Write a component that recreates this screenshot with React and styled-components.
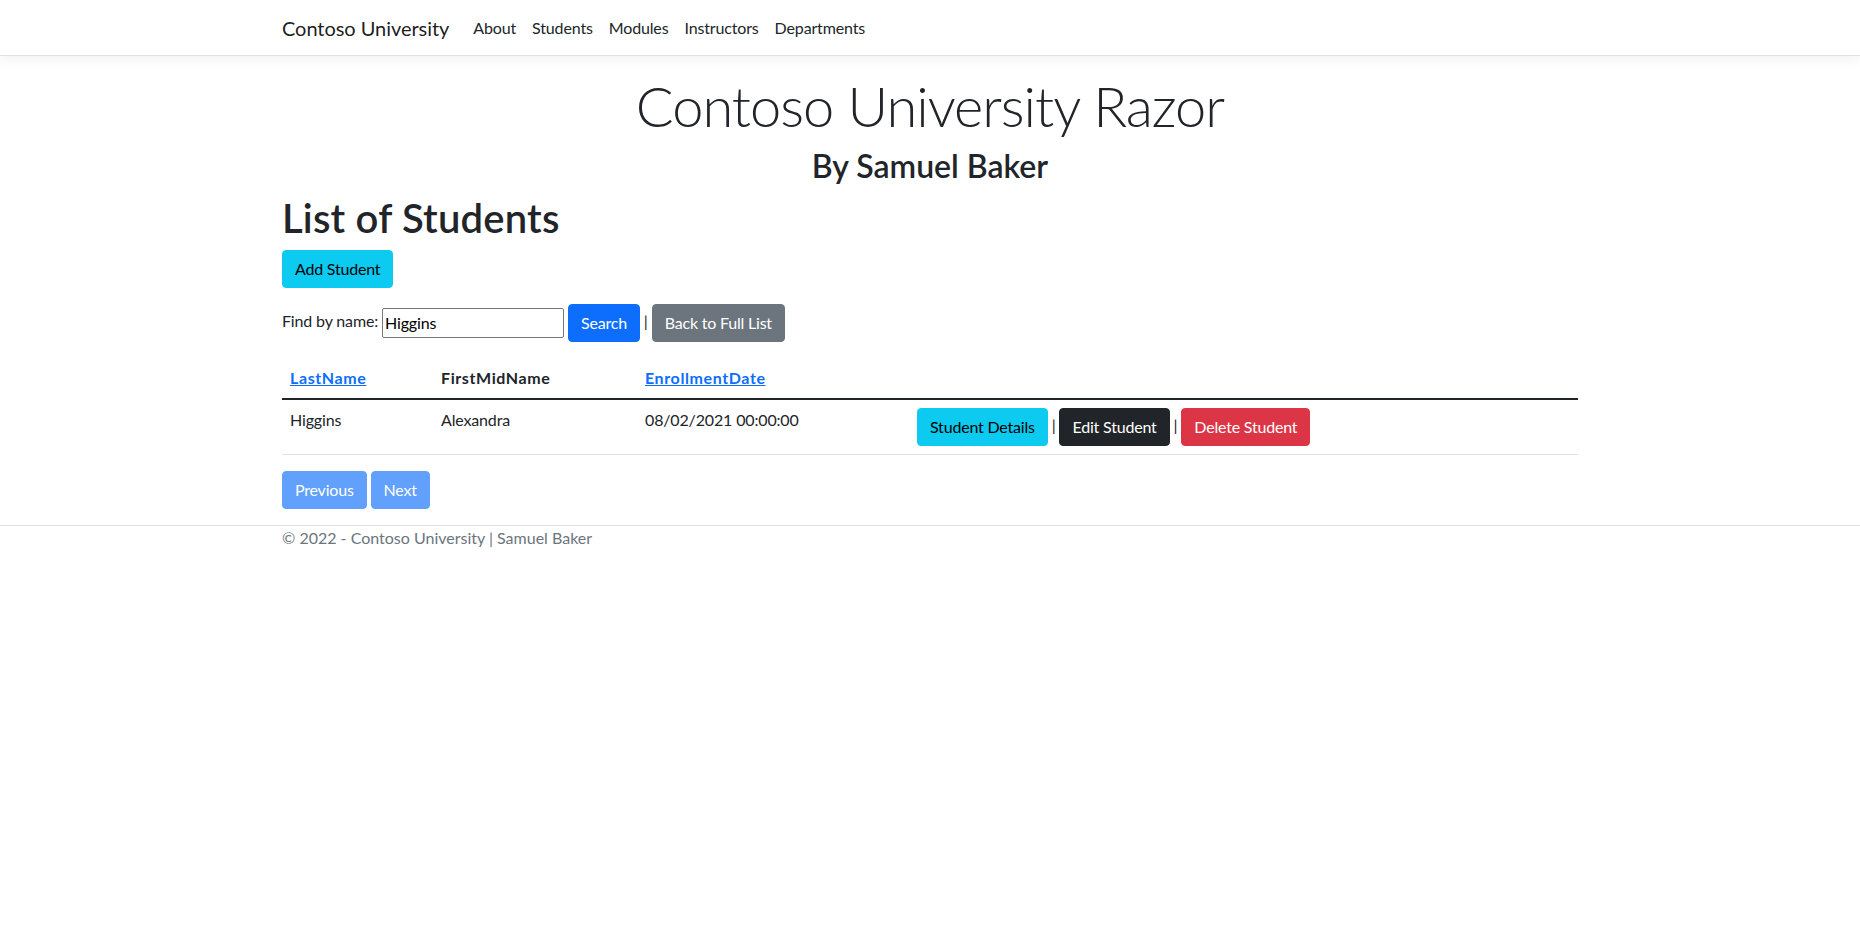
import React from 'react';
import styled, { createGlobalStyle, css } from 'styled-components';

const GlobalStyle = createGlobalStyle`
  *, *::before, *::after {
    box-sizing: border-box;
  }

  body {
    margin: 0;
    background: #fff;
    color: #212529;
    font-family: Lato, "Open Sans", sans-serif;
    font-size: 16px;
    font-weight: 400;
    line-height: 1.5;
    letter-spacing: -0.15px;
  }
`;

const students = [
  { last: 'Higgins', first: 'Alexandra', date: '08/02/2021 00:00:00' },
];

const variants = {
  info: css`
    background: #0dcaf0;
    border-color: #0dcaf0;
    color: #000;
  `,
  primary: css`
    background: #0d6efd;
    border-color: #0d6efd;
    color: #fff;
  `,
  secondary: css`
    background: #6c757d;
    border-color: #6c757d;
    color: #fff;
  `,
  dark: css`
    background: #212529;
    border-color: #212529;
    color: #fff;
  `,
  danger: css`
    background: #dc3545;
    border-color: #dc3545;
    color: #fff;
  `,
};

const App = () => {
  return (
    <>
      <GlobalStyle />
      <Navbar>
        <NavInner>
          <Brand href="#">Contoso University</Brand>
          <NavList>
            <li><NavLink href="#">About</NavLink></li>
            <li><NavLink href="#">Students</NavLink></li>
            <li><NavLink href="#">Modules</NavLink></li>
            <li><NavLink href="#">Instructors</NavLink></li>
            <li><NavLink href="#">Departments</NavLink></li>
          </NavList>
        </NavInner>
      </Navbar>

      <Container>
        <Main>
          <Hero>
            <DisplayTitle>Contoso University Razor</DisplayTitle>
            <SubTitle>By Samuel Baker</SubTitle>
          </Hero>

          <PageTitle>List of Students</PageTitle>

          <Para>
            <Button variant="info" href="#">Add Student</Button>
          </Para>

          <Para>
            Find by name:{' '}
            <SearchInput type="text" defaultValue="Higgins" />{' '}
            <Button as="button" variant="primary">Search</Button> |{' '}
            <Button variant="secondary" href="#">Back to Full List</Button>
          </Para>

          <Table>
            <thead>
              <tr>
                <Th width="151"><HeadLink href="#">LastName</HeadLink></Th>
                <Th width="204">FirstMidName</Th>
                <Th width="272"><HeadLink href="#">EnrollmentDate</HeadLink></Th>
                <Th></Th>
              </tr>
            </thead>
            <tbody>
              {students.map((s) => (
                <tr key={s.last}>
                  <Td>{s.last}</Td>
                  <Td>{s.first}</Td>
                  <Td>{s.date}</Td>
                  <Td>
                    <Button variant="info" href="#">Student Details</Button> |{' '}
                    <Button variant="dark" href="#">Edit Student</Button> |{' '}
                    <Button variant="danger" href="#">Delete Student</Button>
                  </Td>
                </tr>
              ))}
            </tbody>
          </Table>

          <Button variant="primary" disabled>Previous</Button>{' '}
          <Button variant="primary" disabled>Next</Button>
        </Main>
      </Container>

      <Footer>
        <Container>© 2022 - Contoso University | Samuel Baker</Container>
      </Footer>
    </>
  );
};

const Container = styled.div`
  width: 100%;
  max-width: 1320px;
  margin: 0 auto;
  padding: 0 12px;
`;

const Navbar = styled.nav`
  background: #fff;
  border-bottom: 1px solid #dee2e6;
  box-shadow: 0 4px 12px rgba(0, 0, 0, 0.05);
  margin-bottom: 16px;
  padding: 8px 0 7px;
`;

const NavInner = styled(Container)`
  display: flex;
  align-items: center;
`;

const Brand = styled.a`
  color: rgba(0, 0, 0, 0.9);
  font-size: 20px;
  line-height: 30px;
  letter-spacing: -0.05px;
  padding: 5px 0;
  margin-right: 16px;
  text-decoration: none;
  white-space: nowrap;
`;

const NavList = styled.ul`
  display: flex;
  list-style: none;
  margin: 0;
  padding: 0;
`;

const NavLink = styled.a`
  display: block;
  padding: 8px;
  color: #212529;
  text-decoration: none;
`;

const Main = styled.main`
  padding-bottom: 16px;
`;

const Hero = styled.div`
  text-align: center;
`;

const DisplayTitle = styled.h1`
  margin: 0 0 8px;
  font-size: 56px;
  font-weight: 300;
  line-height: 1.2;
  letter-spacing: -1px;
`;

const SubTitle = styled.h2`
  margin: 0 0 8px;
  font-size: 32px;
  font-weight: 600;
  line-height: 1.2;
  letter-spacing: normal;
`;

const PageTitle = styled.h1`
  margin: 0 0 8px;
  font-size: 40px;
  font-weight: 600;
  line-height: 1.2;
  letter-spacing: 0.2px;
`;

const Para = styled.p`
  margin: 0 0 16px;
`;

const Button = styled.a`
  display: inline-block;
  padding: 6px 12px;
  border: 1px solid transparent;
  border-radius: 4px;
  font-family: inherit;
  font-size: 16px;
  font-weight: 400;
  line-height: 1.5;
  letter-spacing: -0.2px;
  text-align: center;
  text-decoration: none;
  vertical-align: middle;
  cursor: pointer;
  ${({ variant }) => variants[variant]};
  ${({ disabled }) => disabled && css`
    opacity: 0.65;
    pointer-events: none;
  `};
`;

const SearchInput = styled.input`
  width: 182px;
  height: 30px;
  padding: 1px 2px;
  border: 1px solid #767676;
  border-radius: 2px;
  font-family: inherit;
  font-size: 16px;
  line-height: 24px;
  letter-spacing: inherit;
  color: #000;
  vertical-align: middle;
`;

const Table = styled.table`
  width: 100%;
  margin-bottom: 16px;
  border-collapse: collapse;
`;

const Th = styled.th`
  padding: 8px;
  text-align: left;
  font-weight: 700;
  letter-spacing: 0.6px;
  vertical-align: bottom;
  border-bottom: 2px solid #212529;
`;

const HeadLink = styled.a`
  color: #0d6efd;
  text-decoration: underline;
`;

const Td = styled.td`
  padding: 8px;
  vertical-align: top;
  border-bottom: 1px solid #dee2e6;
`;

const Footer = styled.footer`
  border-top: 1px solid #dee2e6;
  color: #6c757d;
  letter-spacing: 0;
  white-space: nowrap;
`;

export default App;
